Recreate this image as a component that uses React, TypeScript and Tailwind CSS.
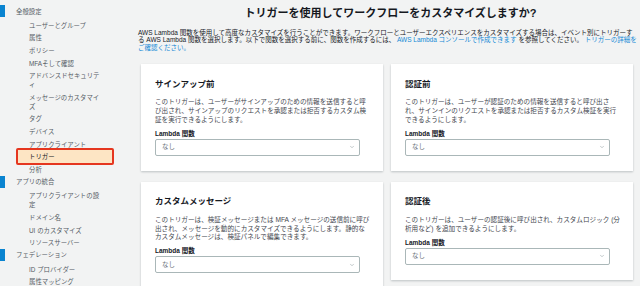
import { ChevronDown } from "lucide-react";

type NavItem = { label: string; active?: boolean };
type NavSection = { title: string; items: NavItem[] };

const sections: NavSection[] = [
  {
    title: "全般設定",
    items: [
      { label: "ユーザーとグループ" },
      { label: "属性" },
      { label: "ポリシー" },
      { label: "MFAそして確認" },
      { label: "アドバンスドセキュリティ" },
      { label: "メッセージのカスタマイズ" },
      { label: "タグ" },
      { label: "デバイス" },
      { label: "アプリクライアント" },
      { label: "トリガー", active: true },
      { label: "分析" },
    ],
  },
  {
    title: "アプリの統合",
    items: [
      { label: "アプリクライアントの設定" },
      { label: "ドメイン名" },
      { label: "UI のカスタマイズ" },
      { label: "リソースサーバー" },
    ],
  },
  {
    title: "フェデレーション",
    items: [{ label: "ID プロバイダー" }, { label: "属性マッピング" }],
  },
];

type Trigger = { title: string; lines: string[] };

const triggers: Trigger[] = [
  {
    title: "サインアップ前",
    lines: [
      "このトリガーは、ユーザーがサインアップのための情報を送信すると呼",
      "び出され、サインアップのリクエストを承認または拒否するカスタム検",
      "証を実行できるようにします。",
    ],
  },
  {
    title: "認証前",
    lines: [
      "このトリガーは、ユーザーが認証のための情報を送信すると呼び出さ",
      "れ、サインインのリクエストを承認または拒否するカスタム検証を実行",
      "できるようにします。",
    ],
  },
  {
    title: "カスタムメッセージ",
    lines: [
      "このトリガーは、検証メッセージまたは MFA メッセージの送信前に呼び",
      "出され、メッセージを動的にカスタマイズできるようにします。静的な",
      "カスタムメッセージは、検証パネルで編集できます。",
    ],
  },
  {
    title: "認証後",
    lines: [
      "このトリガーは、ユーザーの認証後に呼び出され、カスタムロジック (分",
      "析用など) を追加できるようにします。",
    ],
  },
];

function Sidebar() {
  return (
    <aside className="w-[130px] shrink-0 pt-[5px] text-[6.4px] leading-[9px] text-[#545b64]">
      {sections.map((section) => (
        <div key={section.title}>
          <div className="flex h-[12px] items-center">
            <span className="h-[12px] w-[5px] bg-[#0a84d0]" />
            <span className="ml-[11px]">{section.title}</span>
          </div>
          <ul className="mt-[2px]">
            {section.items.map((item) => (
              <li
                key={item.label}
                className={`relative ml-[16px] w-[98px] py-[1.8px] pl-[13px] pr-[13px] ${
                  item.active ? "text-[#16191f]" : ""
                }`}
              >
                {item.active && (
                  <span className="absolute -top-[2.4px] -bottom-[2px] left-0 right-0 rounded-[2px] border-2 border-[#e5361f] bg-[#fde5c4]" />
                )}
                <span className="relative">{item.label}</span>
              </li>
            ))}
          </ul>
        </div>
      ))}
    </aside>
  );
}

function TriggerCard({ trigger }: { trigger: Trigger }) {
  return (
    <div className="bg-white px-[14px] pt-[14.5px] pb-[15px] shadow-[0_1px_2px_rgba(0,28,36,0.22)]">
      <h2 className="text-[8.5px] font-bold leading-[10px] text-[#16191f]">{trigger.title}</h2>
      <p className="mt-[9.6px] text-[6.6px] leading-[8.7px] text-[#3f464e]">
        {trigger.lines.map((line) => (
          <span key={line} className="block whitespace-nowrap">
            {line}
          </span>
        ))}
      </p>
      <div className="mt-[5.3px] text-[6.5px] font-bold leading-[8px] text-[#16191f]">Lambda 関数</div>
      <div className="mt-[1px] flex h-[17px] w-[205px] items-center justify-between rounded-[2px] border border-[#aab7b8] bg-white pl-[6px] pr-[4px]">
        <span className="text-[6.5px] text-[#687078]">なし</span>
        <ChevronDown className="h-[6px] w-[6px] text-[#879596]" strokeWidth={2} />
      </div>
    </div>
  );
}

export default function App() {
  return (
    <div className="flex h-[286px] w-full overflow-hidden bg-[#f2f3f3] font-[family-name:'Liberation_Sans','Noto_Sans_CJK_JP',sans-serif]">
      <Sidebar />
      <main className="min-w-0 flex-1 overflow-hidden pl-[8px] pt-[6px]">
        <h1 className="ml-[3px] text-center text-[11px] font-bold leading-[14px] text-[#16191f]">
          トリガーを使用してワークフローをカスタマイズしますか?
        </h1>
        <div className="mt-[8.5px] text-[6.5px] leading-[7.6px] text-[#16191f]">
          <div className="whitespace-nowrap">
            AWS Lambda 関数を使用して高度なカスタマイズを行うことができます。ワークフローとユーザーエクスペリエンスをカスタマイズする場合は、イベント別にトリガーす
          </div>
          <div className="whitespace-nowrap">
            る AWS Lambda 関数を選択します。以下で関数を選択する前に、関数を作成するには、{" "}
            <a className="text-[#1589d6]">AWS Lambda コンソールで作成できます</a> を参照してください。{" "}
            <a className="text-[#1589d6]">トリガーの詳細を</a>
          </div>
          <div className="whitespace-nowrap">
            <a className="text-[#1589d6]">ご確認ください。</a>
          </div>
        </div>
        <div className="ml-[3px] mr-[7px] mt-[13px] grid grid-cols-2 items-start gap-x-[8px] gap-y-[11px]">
          {triggers.map((t) => (
            <TriggerCard key={t.title} trigger={t} />
          ))}
        </div>
      </main>
    </div>
  );
}
